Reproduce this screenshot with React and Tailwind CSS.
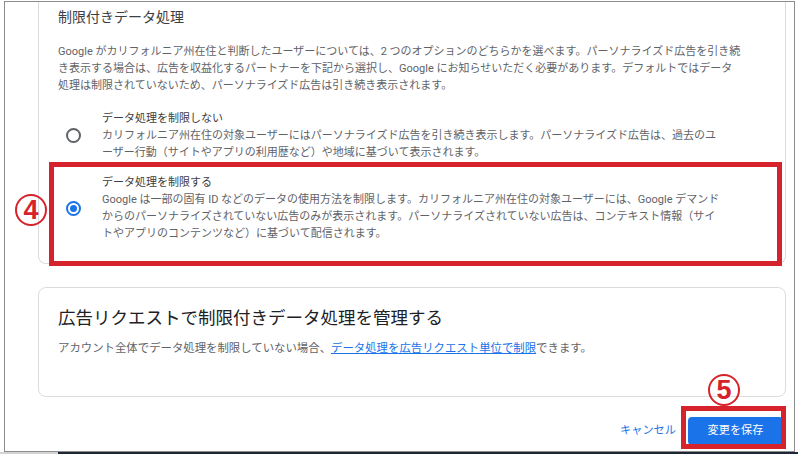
function Radio({ checked }) {
    return checked ? (
        <span className="flex-shrink-0 w-[15px] h-[15px] rounded-full border-2 border-[#1a73e8] flex items-center justify-center">
            <span className="w-[7px] h-[7px] rounded-full bg-[#1a73e8]" />
        </span>
    ) : (
        <span className="flex-shrink-0 w-[15px] h-[15px] rounded-full border-2 border-[#5f6368]" />
    );
}

function Option({ checked, label, lines, className }) {
    return (
        <div className={`flex items-center pl-[8px] gap-[21px] ${className}`}>
            <Radio checked={checked} />
            <div className="text-[11px] leading-[17px] text-[#5f6368] whitespace-nowrap">
                <div className="text-[#3c4043]">{label}</div>
                {lines.map((l) => (
                    <div key={l}>{l}</div>
                ))}
            </div>
        </div>
    );
}

function Marker({ num, className }) {
    return (
        <div className={`absolute w-[32px] h-[32px] rounded-full border-[2.5px] border-[#d6222a] flex items-center justify-center text-[#d6222a] font-bold text-[27px] leading-none font-['Liberation_Sans',sans-serif] ${className}`}>
            {num}
        </div>
    );
}

export default function App() {
    return (
        <div className="relative w-[798px] h-[454px] overflow-hidden bg-white font-['Roboto','Noto_Sans_CJK_JP',sans-serif]">
            <div className="ml-[4px] mt-[1px] w-[791px] h-[451px] border border-[#8c8c8c] pl-[33px] pr-[7px] flex flex-col">
                <section className="w-[748px] h-[262px] border border-t-0 border-[#dadce0] rounded-b-[8px] px-[19px] pt-[5px]">
                    <h2 className="text-[14px] leading-[20px] text-[#3c4043]">制限付きデータ処理</h2>
                    <div className="mt-[16px] text-[11px] leading-[17px] text-[#5f6368] whitespace-nowrap">
                        <div>Google がカリフォルニア州在住と判断したユーザーについては、2 つのオプションのどちらかを選べます。パーソナライズド広告を引き続</div>
                        <div>き表示する場合は、広告を収益化するパートナーを下記から選択し、Google にお知らせいただく必要があります。デフォルトではデータ</div>
                        <div>処理は制限されていないため、パーソナライズド広告は引き続き表示されます。</div>
                    </div>
                    <Option
                        className="mt-[16px]"
                        label="データ処理を制限しない"
                        lines={[
                            'カリフォルニア州在住の対象ユーザーにはパーソナライズド広告を引き続き表示します。パーソナライズド広告は、過去のユ',
                            'ーザー行動（サイトやアプリの利用歴など）や地域に基づいて表示されます。',
                        ]}
                    />
                    <Option
                        checked
                        className="mt-[13px]"
                        label="データ処理を制限する"
                        lines={[
                            'Google は一部の固有 ID などのデータの使用方法を制限します。カリフォルニア州在住の対象ユーザーには、Google デマンド',
                            'からのパーソナライズされていない広告のみが表示されます。パーソナライズされていない広告は、コンテキスト情報（サイ',
                            'トやアプリのコンテンツなど）に基づいて配信されます。',
                        ]}
                    />
                </section>

                <section className="mt-[23px] w-[748px] h-[110px] border border-[#dadce0] rounded-[8px] px-[19px] pt-[18px]">
                    <h2 className="text-[17.5px] leading-[24px] text-[#202124]">広告リクエストで制限付きデータ処理を管理する</h2>
                    <p className="mt-[10px] text-[11.4px] leading-[17px] text-[#5f6368] whitespace-nowrap">
                        アカウント全体でデータ処理を制限していない場合、
                        <a className="text-[#1a73e8] underline">データ処理を広告リクエスト単位で制限</a>
                        できます。
                    </p>
                </section>

                <div className="mt-[20px] pr-[4px] flex justify-end items-center gap-[12px]">
                    <span className="text-[11.2px] text-[#1a73e8]">キャンセル</span>
                    <button className="w-[95px] h-[28px] rounded-[4px] bg-[#1a73e8] text-white text-[11.2px] shadow-sm">
                        変更を保存
                    </button>
                </div>
            </div>
            <div className="flex h-[2px]">
                <div className="w-[58px] bg-[#d4d4d4]" />
                <div className="flex-1 bg-[#1f2633]" />
            </div>

            <div className="absolute left-[49px] top-[162px] w-[733px] h-[104px] border-[5px] border-[#d6222a]" />
            <div className="absolute left-[681px] top-[406px] w-[105px] h-[43px] border-[5px] border-[#d6222a]" />
            <Marker num="4" className="left-[15px] top-[194px]" />
            <Marker num="5" className="left-[708px] top-[374px]" />
        </div>
    );
}
